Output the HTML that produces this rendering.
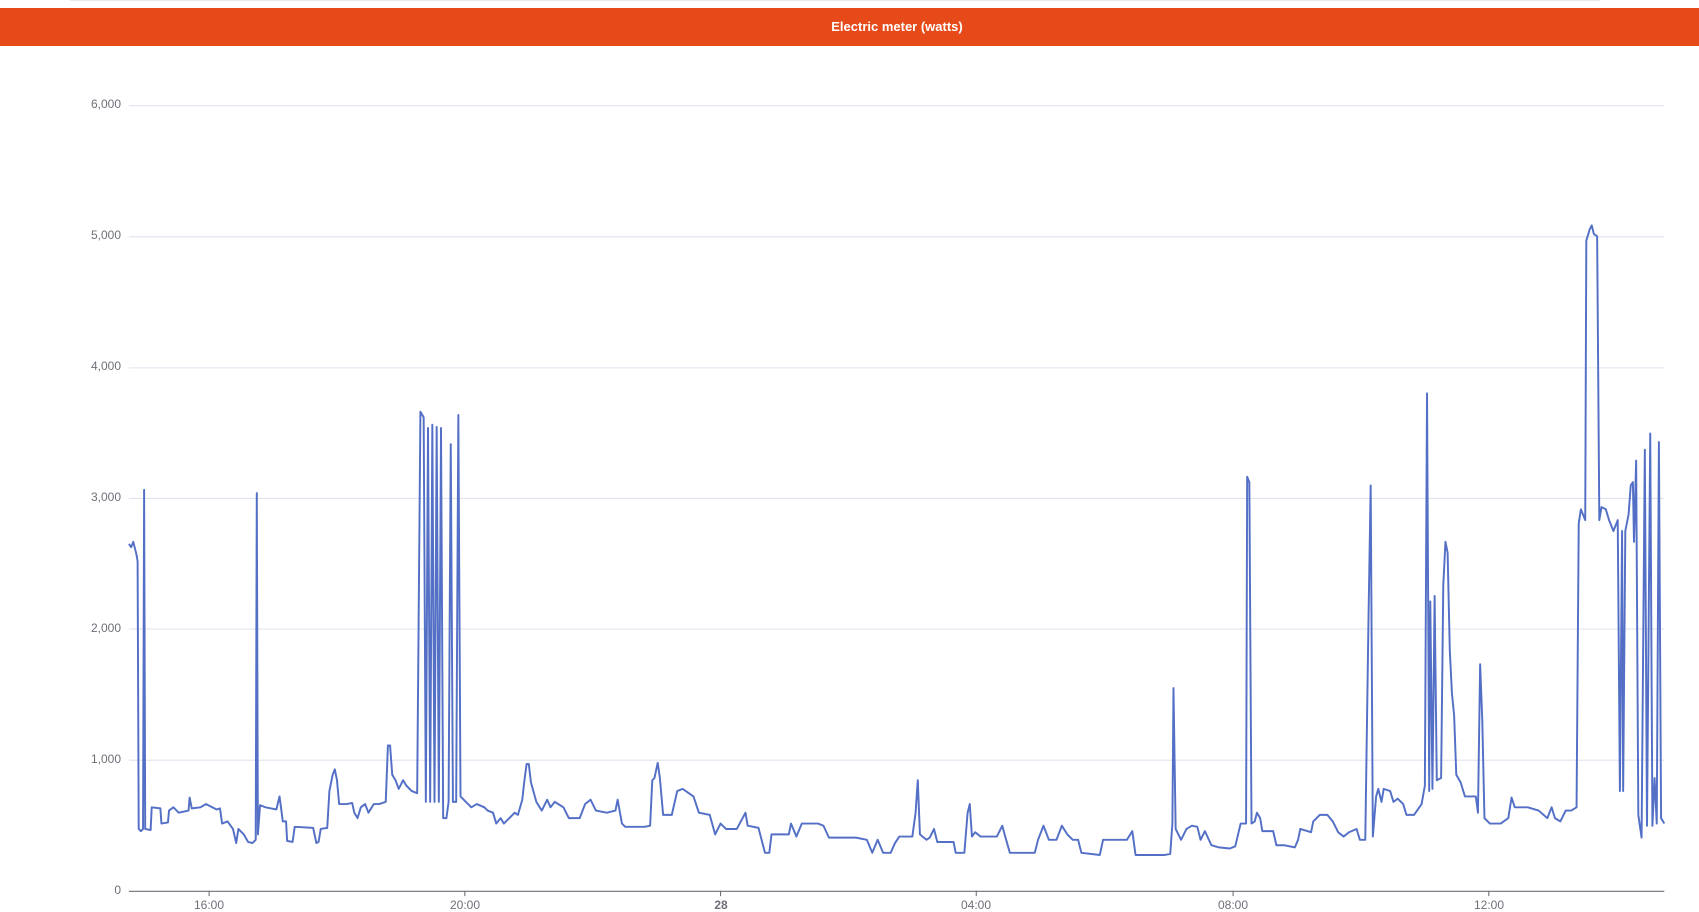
<!DOCTYPE html>
<html><head><meta charset="utf-8"><style>
html,body{margin:0;padding:0;background:#fff;width:1699px;height:911px;overflow:hidden;font-family:"Liberation Sans",sans-serif}
.hdr{position:absolute;left:0;top:8px;width:1699px;height:38px;background:#e64a19;color:#fff;font-weight:bold;font-size:13px;line-height:38px}
.hdr span{position:absolute;left:897px;transform:translateX(-50%);white-space:nowrap}
.top{position:absolute;left:70px;top:0;width:1530px;height:1px;background:#e8e8ee}
.yl{position:absolute;right:1578px;font-size:12px;color:#6e7079;text-align:right}
.xl{position:absolute;top:898px;font-size:12px;color:#6e7079;width:60px;margin-left:-30px;text-align:center}
svg{position:absolute;left:0;top:0}
</style></head><body>
<div class="top"></div>
<div class="hdr"><span>Electric meter (watts)</span></div>
<div class="yl" style="top:97px">6,000</div>
<div class="yl" style="top:228px">5,000</div>
<div class="yl" style="top:359px">4,000</div>
<div class="yl" style="top:490px">3,000</div>
<div class="yl" style="top:621px">2,000</div>
<div class="yl" style="top:752px">1,000</div>
<div class="yl" style="top:883px">0</div>
<div class="xl" style="left:209px">16:00</div>
<div class="xl" style="left:465px">20:00</div>
<div class="xl" style="left:721px;font-weight:bold">28</div>
<div class="xl" style="left:976px">04:00</div>
<div class="xl" style="left:1233px">08:00</div>
<div class="xl" style="left:1489px">12:00</div>
<svg width="1699" height="911" viewBox="0 0 1568 840.7" preserveAspectRatio="none">
<g stroke="#e0e4ef" stroke-width="1">
<line x1="119" x2="1536" y1="97.5" y2="97.5"/><line x1="119" x2="1536" y1="218.5" y2="218.5"/><line x1="119" x2="1536" y1="339.5" y2="339.5"/><line x1="119" x2="1536" y1="460" y2="460"/><line x1="119" x2="1536" y1="580.5" y2="580.5"/><line x1="119" x2="1536" y1="701.5" y2="701.5"/>
</g>
<line x1="119" x2="1536" y1="822.5" y2="822.5" stroke="#6e7079"/>
<g stroke="#6e7079"><line x1="193" x2="193" y1="822" y2="827"/><line x1="429" x2="429" y1="822" y2="827"/><line x1="665" x2="665" y1="822" y2="827"/><line x1="901" x2="901" y1="822" y2="827"/><line x1="1138" x2="1138" y1="822" y2="827"/><line x1="1374" x2="1374" y1="822" y2="827"/></g>
<polyline fill="none" stroke="#5470c6" stroke-width="1.8" stroke-linejoin="round" points="119,502 121,505 123,500 126,512 127,518 128,765 130,767 132,765 133,452 134,765 139,766 140,745 148,746 149,760 155,759 156,748 160,745 165,750 174,748 175,736 177,746 185,745 190,742 200,747 203,746 205,760 210,758 215,765 218,778 220,765 225,770 229,777 233,778 236,775 237,455 238,770 240,743 245,745 255,747 258,735 261,758 264,758 265,776 270,777 272,763 289,764 292,778 294,777 296,765 302,764 304,730 307,715 309,710 311,720 313,742 320,742 325,741 327,750 330,755 333,745 337,742 340,750 345,742 350,742 356,740 358,688 360,688 362,715 365,720 368,728 372,720 375,725 380,730 385,732 388,380 391,385 393,740 395,395 397,740 399,392 401,740 403,394 405,740 407,395 409,755 412,755 414,740 416,410 418,740 421,740 423,383 425,735 430,740 435,745 440,742 447,745 450,748 455,750 458,760 462,755 465,760 470,755 475,750 478,752 482,738 484,720 486,705 488,705 490,722 495,740 500,748 505,738 508,745 512,740 520,745 525,755 535,755 540,742 545,738 550,748 560,750 568,748 570,738 574,760 577,763 595,763 600,762 602,720 604,718 607,704 609,718 612,752 620,752 625,730 630,728 640,735 645,750 655,752 660,770 665,760 670,765 680,765 688,750 690,762 700,764 706,787 710,787 712,770 725,770 728,770 730,760 735,772 740,760 755,760 760,762 765,773 790,773 800,775 805,787 810,775 815,787 822,787 826,778 830,772 842,772 845,750 847,720 849,770 855,775 858,773 862,765 865,777 880,777 882,787 890,787 893,750 895,742 897,772 900,768 905,772 920,772 925,762 928,773 932,787 955,787 958,775 963,762 968,775 975,775 980,762 985,770 990,775 995,775 998,787 1015,789 1018,775 1040,775 1045,767 1048,789 1075,789 1080,788 1082,760 1083,635 1085,765 1090,775 1095,765 1100,762 1105,763 1108,775 1112,767 1118,780 1125,782 1135,783 1140,781 1145,760 1150,760 1151,440 1153,445 1155,760 1158,758 1160,750 1163,755 1165,767 1175,767 1178,780 1185,780 1195,782 1198,775 1200,765 1210,768 1212,758 1215,755 1218,752 1225,752 1230,758 1235,768 1240,772 1245,768 1252,765 1255,775 1260,775 1263,570 1265,448 1267,772 1270,735 1272,728 1275,740 1277,728 1283,730 1286,740 1290,737 1295,742 1298,752 1305,752 1312,742 1315,725 1317,363 1319,730 1320,555 1322,728 1324,550 1326,720 1330,718 1332,540 1334,500 1336,510 1338,600 1340,640 1342,660 1344,715 1348,722 1352,735 1362,735 1364,750 1366,613 1368,665 1370,755 1375,760 1385,760 1392,755 1395,736 1398,745 1410,745 1420,748 1428,755 1432,745 1435,755 1440,758 1445,748 1450,748 1455,745 1457,483 1459,470 1463,480 1464,222 1467,212 1469,208 1471,216 1474,218 1476,480 1478,468 1482,470 1485,480 1489,490 1493,480 1495,730 1497,490 1498,730 1500,490 1503,475 1505,448 1507,445 1508,500 1510,425 1512,752 1515,773 1518,415 1520,762 1523,400 1525,762 1527,718 1529,760 1531,408 1533,755 1536,760"/>
</svg>
</body></html>
